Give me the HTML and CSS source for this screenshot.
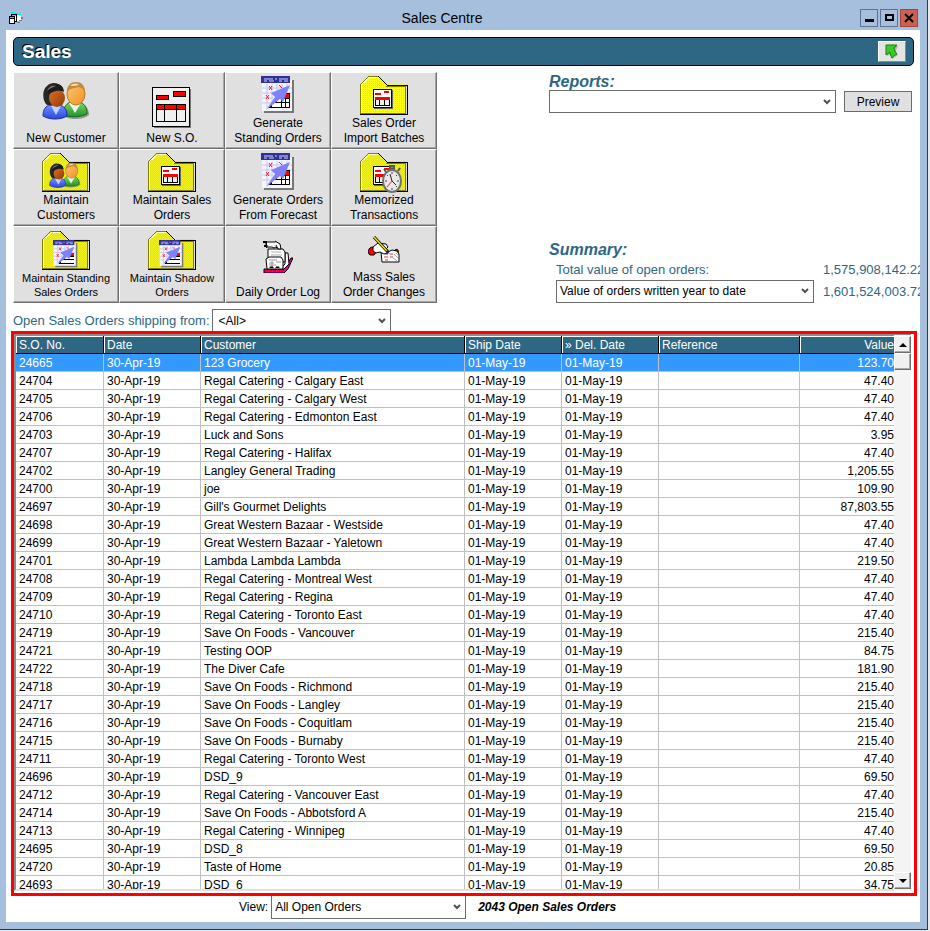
FILE: index.html
```html
<!DOCTYPE html>
<html lang="en">
<head>
    <meta charset="UTF-8">
    <title>Sales Centre</title>
    <link rel="stylesheet" href="styles.css">
</head>
<body>

<!-- shared icon parts -->
<svg class="defs" width="0" height="0" aria-hidden="true">
    <defs>
        <pattern id="dither" width="2" height="2" patternUnits="userSpaceOnUse">
            <rect width="2" height="2" fill="#f0f020"/>
            <rect width="1" height="1" fill="#d0d0b0"/>
            <rect x="1" y="1" width="1" height="1" fill="#d0d0b0"/>
        </pattern>
        <pattern id="ditherBright" width="2" height="2" patternUnits="userSpaceOnUse">
            <rect width="2" height="2" fill="#fcfc10"/>
            <rect width="1" height="1" fill="#d8d880"/>
        </pattern>
        <linearGradient id="darkSkin" x1="0" y1="0" x2="1" y2="1">
            <stop offset="0" stop-color="#e0702a"/>
            <stop offset="1" stop-color="#8e3a06"/>
        </linearGradient>
        <linearGradient id="lightSkin" x1="0" y1="0" x2="1" y2="1">
            <stop offset="0" stop-color="#ffc870"/>
            <stop offset="1" stop-color="#f09028"/>
        </linearGradient>
        <linearGradient id="blueCoat" x1="0" y1="0" x2="0" y2="1">
            <stop offset="0" stop-color="#7090ff"/>
            <stop offset="1" stop-color="#2a45e0"/>
        </linearGradient>
        <linearGradient id="greenCoat" x1="0" y1="0" x2="0" y2="1">
            <stop offset="0" stop-color="#80d860"/>
            <stop offset="1" stop-color="#209030"/>
        </linearGradient>

        <symbol id="people" viewBox="0 0 48 40">
            <path d="M23 36c0-9 3-13 8-14h7c6 2 9 6 9 12-5 5-18 5-24 2z" fill="#777" opacity=".7"/>
            <path d="M21 34c0-8 4-12 8-13h8c5 1 8 5 8 12-5 3-17 4-24 1z" fill="url(#greenCoat)" stroke="#0a7418"/>
            <path d="M27 22l6 10 6-10z" fill="#e8fbe8"/>
            <ellipse cx="34" cy="13" rx="9" ry="11" fill="url(#lightSkin)" stroke="#b87820"/>
            <path d="M25 11c0-7 4-10 9-10s9 3 9 10c-2-3-3-4-6-5-4 1-9 1-12 5z" fill="#c08a3c"/>
            <path d="M28 5c3-3 7-3 9-1-3 1-6 1-9 1z" fill="#f4d9a0"/>
            <path d="M1 35c0-7 3-10 7-11h9c5 1 8 4 8 11-6 4-18 4-24 0z" fill="url(#blueCoat)" stroke="#1a2cac"/>
            <path d="M9 25l5 9 5-9z" fill="#b8d4ff"/>
            <path d="M5 24C0 20 0 8 5 5c5-5 12-3 16 2l-3 5-6 12z" fill="#282828"/>
            <ellipse cx="15" cy="17" rx="8" ry="9" fill="url(#darkSkin)"/>
            <path d="M5 14C6 7 11 3 15 3c4 0 7 4 7 8-5-2-8-1-11 0-3 1-4 2-6 3z" fill="#1c1c1c"/>
            <path d="M5 10c2-4 5-6 9-5-3 1-6 2-9 5z" fill="#8a8a8a"/>
        </symbol>

        <symbol id="form" viewBox="0 0 40 42">
            <g shape-rendering="crispEdges">
                <path d="M2 2h37v39H2z" fill="#777"/>
                <path d="M0 0h38v40H0z" fill="#000"/>
                <path d="M1 1h36v38H1z" fill="#f0f0f0"/>
                <path d="M4 8h13v5H4zM21 4h13v6H21zM4 17h30v18H4z" fill="#000"/>
                <path d="M5 9h11v3H5zM22 5h11v4H22zM5 18h7v4H5zM13 18h11v4H13zM25 18h8v4h-8z" fill="#f00"/>
                <path d="M5 23h7v11H5zM13 23h11v11H13zM25 23h8v11h-8z" fill="#f0f0f0"/>
            </g>
        </symbol>

        <symbol id="formSmall" viewBox="0 0 20 20">
            <g shape-rendering="crispEdges">
                <path d="M1 1h19v19H1z" fill="#666"/>
                <path d="M0 0h19v19H0z" fill="#000"/>
                <path d="M1 1h17v17H1z" fill="#fff"/>
                <path d="M2 4h6v2H2zM11 2h5v2h-5zM2 8h15v3H2z" fill="#f00"/>
                <path d="M2 11h15v6H2z" fill="#000"/>
                <path d="M3 11h3v5H3zM7 11h4v5H7zM12 11h4v5h-4z" fill="#f0f0f0"/>
            </g>
        </symbol>

        <symbol id="calendar" viewBox="0 0 34 38">
            <path d="M3 4h30v33H3z" fill="#777"/>
            <path d="M1 4h30v31H1z" fill="#f4f4fc"/>
            <path d="M1 12h30M1 17h30M1 22h16M1 27h12M6 8v24M11 8v22M16 8v18M21 8v10M26 8v6" stroke="#c4c4ee" fill="none"/>
            <path d="M0 0h29v7H0z" fill="#30309c"/>
            <path d="M3 3h9M14 3h2M18 3h9M3 5h3M8 5h5M18 5h3M23 5h4" stroke="#d4d4f4"/>
            <path d="M8 10l3 4M11 10l-3 4M5 19l3 4M8 19l-3 4M18 9l3 3" stroke="#f02020"/>
            <path d="M14 18h15v13H10z" fill="#fff"/>
            <g shape-rendering="crispEdges">
                <path d="M15 17h14v15H8v-2l7-7z" fill="#000"/>
                <path d="M16 18h12v4H16z" fill="#f00"/>
                <path d="M16 23h4v3h-4zM21 23h3v3h-3zM25 23h3v3h-3zM11 27h9v4h-9zM21 27h3v4h-3zM25 27h3v4h-3z" fill="#fff"/>
            </g>
            <path d="M29 9L10 17l4 4-9 13 14-11 3 3z" fill="#8080fa"/>
        </symbol>

        <!-- folder, takes its paper colour from the svg that uses it -->
        <symbol id="tab" viewBox="0 0 50 41">
            <g shape-rendering="crispEdges">
                <path d="M1 39V10l9-9h9l8 8h20v30z"/>
                <path d="M2 38V10l9-8h8" fill="none" stroke="#ffffc0"/>
                <path d="M1 39V10l9-9h9" fill="none" stroke="#808000"/>
                <path d="M27 11h19M46 11v27H2" fill="none" stroke="#808000"/>
                <path d="M19 1l9 9h20v29H1" fill="none" stroke="#000"/>
            </g>
        </symbol>
    </defs>
</svg>

<div class="window">
    <header class="title-bar">
        <svg class="app-icon" width="16" height="14" viewBox="0 0 16 14" shape-rendering="crispEdges" aria-hidden="true">
            <path d="M5 3l8 1v6H8z" fill="#fff"/>
            <path d="M13 6h2v2h-2zM11 9h3v1h-3zM9 11h3v1H9z" fill="#777"/>
            <path d="M3 1h4v1h4v1h2v1H9V3H5V2H3z" fill="#00f0f0"/>
            <path d="M3 3h6v8H3zM1 5h6v8H1z"/>
            <path d="M4 4h4v1H4zM2 6h4v1H2z" fill="#00f0f0"/>
            <path d="M7 5h1v5H7zM2 8h4v4H2z" fill="#fff"/>
        </svg>
        <h1>Sales Centre</h1>
        <div class="window-buttons">
            <button type="button" aria-label="Minimize"><svg width="10" height="10"><path d="M1 6h9v3H1z"/></svg></button>
            <button type="button" aria-label="Maximize"><svg width="10" height="10"><path d="M1 1h9v7H1zM3 3v3h5V3z" fill-rule="evenodd"/></svg></button>
            <button type="button" class="close" aria-label="Close"><svg width="10" height="10"><path d="M1 1l8 8M9 1L1 9" stroke="#000" stroke-width="2"/></svg></button>
        </div>
    </header>

    <main class="content">
        <div class="section-bar">
            <h2>Sales</h2>
            <button type="button" class="go-button" aria-label="Back">
                <svg width="14" height="16" viewBox="0 0 14 16">
                    <path d="M2 2h11l-2 4c0 3 1 4 2 5l-6 4c-1-2-1-4-1-5l-4 2z" fill="#777" opacity=".5"/>
                    <path d="M1 1h11L9 4c0 2 1 4 3 6-2 1-4 2-5 4-1-2-2-4-2-6l-4 3z" fill="#38cc28" stroke="#148010"/>
                </svg>
            </button>
        </div>

        <div class="top">
            <div class="tools">
                <button type="button">
                    <svg class="icon" width="48" height="40"><use href="#people"/></svg>
                    <span class="low">New Customer</span>
                </button>
                <button type="button">
                    <svg class="icon" width="40" height="42"><use href="#form"/></svg>
                    <span class="near">New S.O.</span>
                </button>
                <button type="button">
                    <svg class="icon" width="34" height="38"><use href="#calendar"/></svg>
                    <span class="near">Generate<br>Standing Orders</span>
                </button>
                <button type="button">
                    <svg class="icon" width="50" height="41" fill="url(#ditherBright)"><use href="#tab"/><use href="#formSmall" x="14" y="14" width="20" height="20"/></svg>
                    <span>Sales Order<br>Import Batches</span>
                </button>
                <button type="button">
                    <svg class="icon" width="50" height="41" fill="url(#dither)"><use href="#tab"/><use href="#people" x="8" y="10" width="32" height="27"/></svg>
                    <span>Maintain<br>Customers</span>
                </button>
                <button type="button">
                    <svg class="icon" width="50" height="41" fill="url(#dither)"><use href="#tab"/><use href="#formSmall" x="14" y="14" width="20" height="20"/></svg>
                    <span>Maintain Sales<br>Orders</span>
                </button>
                <button type="button">
                    <svg class="icon" width="34" height="38"><use href="#calendar"/></svg>
                    <span class="near">Generate Orders<br>From Forecast</span>
                </button>
                <button type="button">
                    <svg class="icon" width="50" height="41" fill="url(#dither)">
                        <use href="#tab"/>
                        <use href="#formSmall" x="14" y="14" width="20" height="20"/>
                        <path d="M31 14h4v3h-4zM25 17l2 3M41 16l-2 3" fill="#888" stroke="#555" stroke-width="2"/>
                        <ellipse cx="33" cy="29" rx="9" ry="11" fill="#e8e8e8" stroke="#707070" stroke-width="2"/>
                        <path d="M33 20v2M33 36v2M26 29h2M38 29h2M28 23l1 1M38 23l-1 1M28 35l1-1M38 35l-1-1" stroke="#444"/>
                        <path d="M31 22l2 7 4 4" fill="none" stroke="#222"/>
                        <path d="M33 29l-5 6" stroke="#f03030"/>
                    </svg>
                    <span>Memorized<br>Transactions</span>
                </button>
                <button type="button" class="small">
                    <svg class="icon" width="50" height="41" fill="url(#dither)"><use href="#tab"/><use href="#calendar" x="11" y="10" width="27" height="28"/></svg>
                    <span>Maintain Standing<br>Sales Orders</span>
                </button>
                <button type="button" class="small">
                    <svg class="icon" width="50" height="41" fill="url(#dither)"><use href="#tab"/><use href="#calendar" x="11" y="10" width="27" height="28"/></svg>
                    <span>Maintain Shadow<br>Orders</span>
                </button>
                <button type="button">
                    <svg class="icon raised" width="30" height="33" viewBox="0 0 30 33">
                        <path d="M1 29h20l7-11h2l-5 11-4 4H1z" fill="#e800a0" stroke="#000"/>
                        <path d="M2 31h18" stroke="#f00" stroke-width="2" stroke-dasharray="3 1"/>
                        <path d="M18 13h7l1 11-6 6z" fill="#fff" stroke="#000"/>
                        <path d="M22 12v12l-3 3" fill="none" stroke="#000"/>
                        <path d="M5 9h15l2 3v10H5z" fill="#fff" stroke="#000"/>
                        <path d="M8 12h10M8 15h11" stroke="#b0b0b0"/>
                        <path d="M3 19l3-2h12l2 3v9H4z" fill="#fff" stroke="#000"/>
                        <path d="M6 20h8M6 23h5M13 22h5M6 25h7M9 21v6" stroke="#999"/>
                        <path d="M7 28v-1h3v1M13 28v-1h3v1" stroke="#000"/>
                        <path d="M3 2h9l3 2v5l-2-2-2 1-2-1H4V5H3z" fill="#fff" stroke="#000"/>
                        <path d="M0 1h4v2H0zM1 5h3v2H1zM3 1h1v7H3z"/>
                        <path d="M12 1l5 3 1 5h-3l-2-4" fill="#fff" stroke="#000"/>
                    </svg>
                    <span>Daily Order Log</span>
                </button>
                <button type="button">
                    <svg class="icon write" width="32" height="28" viewBox="0 0 32 28">
                        <path d="M5 11c-5 0-6 6-3 8h4l3-4z" fill="#f00" stroke="#000"/>
                        <path d="M27 14c3-2 4 1 3 4l-3-2z" fill="#f00" stroke="#000"/>
                        <path d="M13 16l4-2 3 2 4-2 5 1 2 3v8H14z" fill="#fff" stroke="#000"/>
                        <path d="M17 18h3M22 18h3M16 21h4M22 21h3M17 24h3" stroke="#e83030"/>
                        <path d="M26 18l4 4M24 21l5 4M28 17l2 2" stroke="#aaa"/>
                        <path d="M5 11l5-4 8 1 2 3-2 2 2 4-4 1-4-2-4 1-3-2z" fill="#fff" stroke="#000"/>
                        <path d="M6 1l14 15" stroke="#000" stroke-width="3"/>
                        <path d="M6 1l13 14" stroke="#f8e800" stroke-width="1.5"/>
                        <path d="M19 14l3 4-4-2z" fill="#0020a0"/>
                    </svg>
                    <span>Mass Sales<br>Order Changes</span>
                </button>
            </div>

            <div class="side">
                <form class="reports">
                    <h3><label for="report">Reports:</label></h3>
                    <div class="report-row">
                        <select id="report"><option></option></select>
                        <button type="button" class="preview">Preview</button>
                    </div>
                </form>
                <section class="summary">
                    <h3>Summary:</h3>
                    <div class="summary-row">
                        <span class="summary-label">Total value of open orders:</span>
                        <span class="amount">1,575,908,142.22</span>
                    </div>
                    <div class="summary-row">
                        <select aria-label="Summary value"><option>Value of orders written year to date</option></select>
                        <span class="amount">1,601,524,003.72</span>
                    </div>
                </section>
            </div>
        </div>

        <div class="ship-from">
            <label for="ship">Open Sales Orders shipping from:</label>
            <select id="ship"><option>&lt;All&gt;</option></select>
        </div>

        <div class="grid">
            <div class="grid-body">
                <table>
                    <colgroup>
                        <col class="c-no"><col class="c-date"><col><col class="c-date"><col class="c-date"><col class="c-ref"><col class="c-value">
                    </colgroup>
                    <thead>
                        <tr><th>S.O. No.</th><th>Date</th><th>Customer</th><th>Ship Date</th><th>» Del. Date</th><th>Reference</th><th>Value</th></tr>
                    </thead>
                    <tbody>
                        <tr class="selected"><td>24665</td><td>30-Apr-19</td><td>123 Grocery</td><td>01-May-19</td><td>01-May-19</td><td></td><td>123.70</td></tr>
                        <tr><td>24704</td><td>30-Apr-19</td><td>Regal Catering - Calgary East</td><td>01-May-19</td><td>01-May-19</td><td></td><td>47.40</td></tr>
                        <tr><td>24705</td><td>30-Apr-19</td><td>Regal Catering - Calgary West</td><td>01-May-19</td><td>01-May-19</td><td></td><td>47.40</td></tr>
                        <tr><td>24706</td><td>30-Apr-19</td><td>Regal Catering - Edmonton East</td><td>01-May-19</td><td>01-May-19</td><td></td><td>47.40</td></tr>
                        <tr><td>24703</td><td>30-Apr-19</td><td>Luck and Sons</td><td>01-May-19</td><td>01-May-19</td><td></td><td>3.95</td></tr>
                        <tr><td>24707</td><td>30-Apr-19</td><td>Regal Catering - Halifax</td><td>01-May-19</td><td>01-May-19</td><td></td><td>47.40</td></tr>
                        <tr><td>24702</td><td>30-Apr-19</td><td>Langley General Trading</td><td>01-May-19</td><td>01-May-19</td><td></td><td>1,205.55</td></tr>
                        <tr><td>24700</td><td>30-Apr-19</td><td>joe</td><td>01-May-19</td><td>01-May-19</td><td></td><td>109.90</td></tr>
                        <tr><td>24697</td><td>30-Apr-19</td><td>Gill's Gourmet Delights</td><td>01-May-19</td><td>01-May-19</td><td></td><td>87,803.55</td></tr>
                        <tr><td>24698</td><td>30-Apr-19</td><td>Great Western Bazaar - Westside</td><td>01-May-19</td><td>01-May-19</td><td></td><td>47.40</td></tr>
                        <tr><td>24699</td><td>30-Apr-19</td><td>Great Western Bazaar - Yaletown</td><td>01-May-19</td><td>01-May-19</td><td></td><td>47.40</td></tr>
                        <tr><td>24701</td><td>30-Apr-19</td><td>Lambda Lambda Lambda</td><td>01-May-19</td><td>01-May-19</td><td></td><td>219.50</td></tr>
                        <tr><td>24708</td><td>30-Apr-19</td><td>Regal Catering - Montreal West</td><td>01-May-19</td><td>01-May-19</td><td></td><td>47.40</td></tr>
                        <tr><td>24709</td><td>30-Apr-19</td><td>Regal Catering - Regina</td><td>01-May-19</td><td>01-May-19</td><td></td><td>47.40</td></tr>
                        <tr><td>24710</td><td>30-Apr-19</td><td>Regal Catering - Toronto East</td><td>01-May-19</td><td>01-May-19</td><td></td><td>47.40</td></tr>
                        <tr><td>24719</td><td>30-Apr-19</td><td>Save On Foods - Vancouver</td><td>01-May-19</td><td>01-May-19</td><td></td><td>215.40</td></tr>
                        <tr><td>24721</td><td>30-Apr-19</td><td>Testing OOP</td><td>01-May-19</td><td>01-May-19</td><td></td><td>84.75</td></tr>
                        <tr><td>24722</td><td>30-Apr-19</td><td>The Diver Cafe</td><td>01-May-19</td><td>01-May-19</td><td></td><td>181.90</td></tr>
                        <tr><td>24718</td><td>30-Apr-19</td><td>Save On Foods - Richmond</td><td>01-May-19</td><td>01-May-19</td><td></td><td>215.40</td></tr>
                        <tr><td>24717</td><td>30-Apr-19</td><td>Save On Foods - Langley</td><td>01-May-19</td><td>01-May-19</td><td></td><td>215.40</td></tr>
                        <tr><td>24716</td><td>30-Apr-19</td><td>Save On Foods - Coquitlam</td><td>01-May-19</td><td>01-May-19</td><td></td><td>215.40</td></tr>
                        <tr><td>24715</td><td>30-Apr-19</td><td>Save On Foods - Burnaby</td><td>01-May-19</td><td>01-May-19</td><td></td><td>215.40</td></tr>
                        <tr><td>24711</td><td>30-Apr-19</td><td>Regal Catering - Toronto West</td><td>01-May-19</td><td>01-May-19</td><td></td><td>47.40</td></tr>
                        <tr><td>24696</td><td>30-Apr-19</td><td>DSD_9</td><td>01-May-19</td><td>01-May-19</td><td></td><td>69.50</td></tr>
                        <tr><td>24712</td><td>30-Apr-19</td><td>Regal Catering - Vancouver East</td><td>01-May-19</td><td>01-May-19</td><td></td><td>47.40</td></tr>
                        <tr><td>24714</td><td>30-Apr-19</td><td>Save On Foods - Abbotsford A</td><td>01-May-19</td><td>01-May-19</td><td></td><td>215.40</td></tr>
                        <tr><td>24713</td><td>30-Apr-19</td><td>Regal Catering - Winnipeg</td><td>01-May-19</td><td>01-May-19</td><td></td><td>47.40</td></tr>
                        <tr><td>24695</td><td>30-Apr-19</td><td>DSD_8</td><td>01-May-19</td><td>01-May-19</td><td></td><td>69.50</td></tr>
                        <tr><td>24720</td><td>30-Apr-19</td><td>Taste of Home</td><td>01-May-19</td><td>01-May-19</td><td></td><td>20.85</td></tr>
                        <tr><td>24693</td><td>30-Apr-19</td><td>DSD_6</td><td>01-May-19</td><td>01-May-19</td><td></td><td>34.75</td></tr>
                    </tbody>
                </table>
            </div>
            <div class="scrollbar">
                <button type="button" aria-label="Scroll up"><svg width="8" height="4"><path d="M0 4l4-4 4 4z"/></svg></button>
                <div class="thumb"></div>
                <div class="track"></div>
                <button type="button" aria-label="Scroll down"><svg width="8" height="4"><path d="M0 0l4 4 4-4z"/></svg></button>
            </div>
        </div>

        <footer class="view-bar">
            <label for="view">View:</label>
            <select id="view"><option>All Open Orders</option></select>
            <strong>2043 Open Sales Orders</strong>
        </footer>
    </main>
</div>

</body>
</html>
```
FILE: styles.css
```css
* {
    box-sizing: border-box;
    margin: 0;
    padding: 0;
}

body {
    font-family: "Liberation Sans", Arial, sans-serif;
    font-size: 12px;
    color: #000;
    background: #e8e8e8;
}

button,
select {
    font-family: inherit;
    font-size: 12px;
    color: #000;
}

.defs {
    position: absolute;
}

.window {
    display: flex;
    flex-direction: column;
    height: calc(100vh - 1px);
    margin-right: 2px;
    padding: 0 7px 7px 6px;
    background: #a6bfdc;
    border-right: 1px solid #2b3a50;
    border-bottom: 1px solid #2b3a50;
}

/* title bar */
.title-bar {
    display: flex;
    align-items: center;
    height: 30px;
    padding: 6px 2px 0 2px;
}

.title-bar h1 {
    flex: 1;
    text-align: center;
    font-size: 14px;
    font-weight: normal;
}

.window-buttons {
    display: flex;
    justify-content: flex-end;
    gap: 2px;
}

.window-buttons button {
    display: flex;
    align-items: center;
    justify-content: center;
    width: 18px;
    height: 18px;
    background: #a6bfdc;
    border: 1px solid #5f7490;
}

.window-buttons .close {
    background: #cf604f;
    border-color: #a04838;
}

.content {
    display: flex;
    flex: 1;
    flex-direction: column;
    min-height: 0;
    padding: 7px 0 4px 5px;
    background: #fff;
    overflow: hidden;
}

.section-bar {
    display: flex;
    align-items: center;
    justify-content: space-between;
    height: 29px;
    margin: 0 6px 6px 2px;
    padding: 0 7px 0 8px;
    background: #2e6784;
    border: 1px solid #000;
    border-radius: 5px;
}

.section-bar h2 {
    font-size: 19px;
    line-height: 24px;
    color: #fff;
    text-shadow: -1px -1px 0 #000;
}

.go-button {
    display: flex;
    align-items: center;
    justify-content: center;
    width: 28px;
    height: 21px;
    background: #e4e4e4;
    border: 1px solid;
    border-color: #fff #888 #888 #fff;
}

/* buttons and summary */
.top {
    display: flex;
    justify-content: space-between;
    gap: 20px;
    margin-left: 2px;
}

.tools {
    display: grid;
    grid-template-columns: repeat(4, 106px);
    grid-auto-rows: 77px;
}

.tools button {
    display: flex;
    flex-direction: column;
    align-items: center;
    justify-content: flex-end;
    padding: 2px 0;
    line-height: 15px;
    background: #e0e0e0;
    border: 1px solid;
    border-color: #fff #6e6e6e #6e6e6e #fff;
    box-shadow: inset -1px -1px 0 #a8a8a8;
}

.tools .small {
    padding-bottom: 3px;
    font-size: 11px;
    line-height: 14px;
}

.icon {
    flex: none;
}

.tools .low {
    margin-top: 10px;
}

.tools .near {
    margin-top: 2px;
}

.raised {
    margin-bottom: 12px;
}

.write {
    margin-bottom: 6px;
}

.side {
    display: flex;
    flex-direction: column;
    justify-content: space-between;
    width: 371px;
    padding: 1px 0;
}

h3 {
    font-size: 16px;
    font-style: italic;
    line-height: 17px;
    color: #2e6784;
}

select {
    height: 23px;
    padding: 0 20px 0 3px;
    border: 1px solid #6b6b6b;
    border-radius: 0;
    appearance: none;
    background: #fff url("data:image/svg+xml,%3Csvg xmlns='http://www.w3.org/2000/svg' width='8' height='6'%3E%3Cpath d='M1 1l3 3 3-3' fill='none' stroke='%23505050' stroke-width='2'/%3E%3C/svg%3E") no-repeat right 4px center;
}

.report-row {
    display: flex;
    align-items: center;
    gap: 8px;
    padding-right: 8px;
}

.report-row select {
    flex: 1;
}

.preview {
    width: 68px;
    height: 21px;
    background: #e0e0e0;
    border: 1px solid #6b6b6b;
}

.summary-row {
    display: flex;
    align-items: center;
    height: 22px;
    padding-left: 7px;
    font-size: 13px;
    color: #2e6784;
}

.summary-row select,
.summary-label {
    flex: none;
    width: 258px;
    margin-right: 9px;
}

.amount {
    white-space: nowrap;
}

.ship-from {
    display: flex;
    align-items: center;
    gap: 2px;
    height: 21px;
    margin: 7px 0 0 2px;
    font-size: 13px;
    color: #2e6784;
}

.ship-from select {
    width: 179px;
    padding-left: 6px;
}

/* order list */
.grid {
    display: flex;
    flex: 1;
    min-height: 0;
    margin-right: 3px;
    padding: 0 3px 2px 0;
    border: 3px solid #f00;
    background: #fff;
    z-index: 1;
}

.grid-body {
    flex: 1;
    overflow: hidden;
    border: 2px solid;
    border-color: #8a8a8a #fff #e0e0e0 #8a8a8a;
    border-right: 0;
}

table {
    width: 100%;
    table-layout: fixed;
    border-collapse: separate;
    border-spacing: 0;
}

.c-no {
    width: 88px;
}

.c-date {
    width: 97px;
}

.c-ref {
    width: 141px;
}

.c-value {
    width: 94px;
}

th,
td {
    height: 18px;
    padding: 0 3px;
    line-height: 16px;
    text-align: left;
    white-space: nowrap;
    border-right: 1px solid #c0c0c0;
    border-bottom: 1px solid #c0c0c0;
}

th {
    font-weight: normal;
    color: #fff;
    background: #2e6784;
    border-right-color: #000;
    border-bottom-color: #000;
    box-shadow: inset 1px 1px 0 #fff;
}

th:last-child,
td:last-child {
    padding-right: 0;
    text-align: right;
    border-right: 0;
}

.selected td {
    color: #fff;
    background: #3399ff;
}

.scrollbar {
    display: flex;
    flex-direction: column;
    width: 17px;
    padding: 1px 0 2px;
    background: #f4f4f4;
    border-top: 1px solid #8a8a8a;
}

.scrollbar button,
.thumb {
    display: flex;
    flex: none;
    align-items: center;
    justify-content: center;
    height: 17px;
    background: #f0f0f0;
    border: 1px solid;
    border-color: #fff #6e6e6e #6e6e6e #fff;
    box-shadow: inset -1px -1px 0 #a8a8a8;
}

.track {
    flex: 1;
}

.view-bar {
    display: flex;
    align-items: center;
    height: 22px;
    padding-left: 228px;
}

.view-bar select {
    width: 195px;
    margin: 0 12px 0 3px;
    border-top: 0;
}

.view-bar strong {
    font-style: italic;
}
```
